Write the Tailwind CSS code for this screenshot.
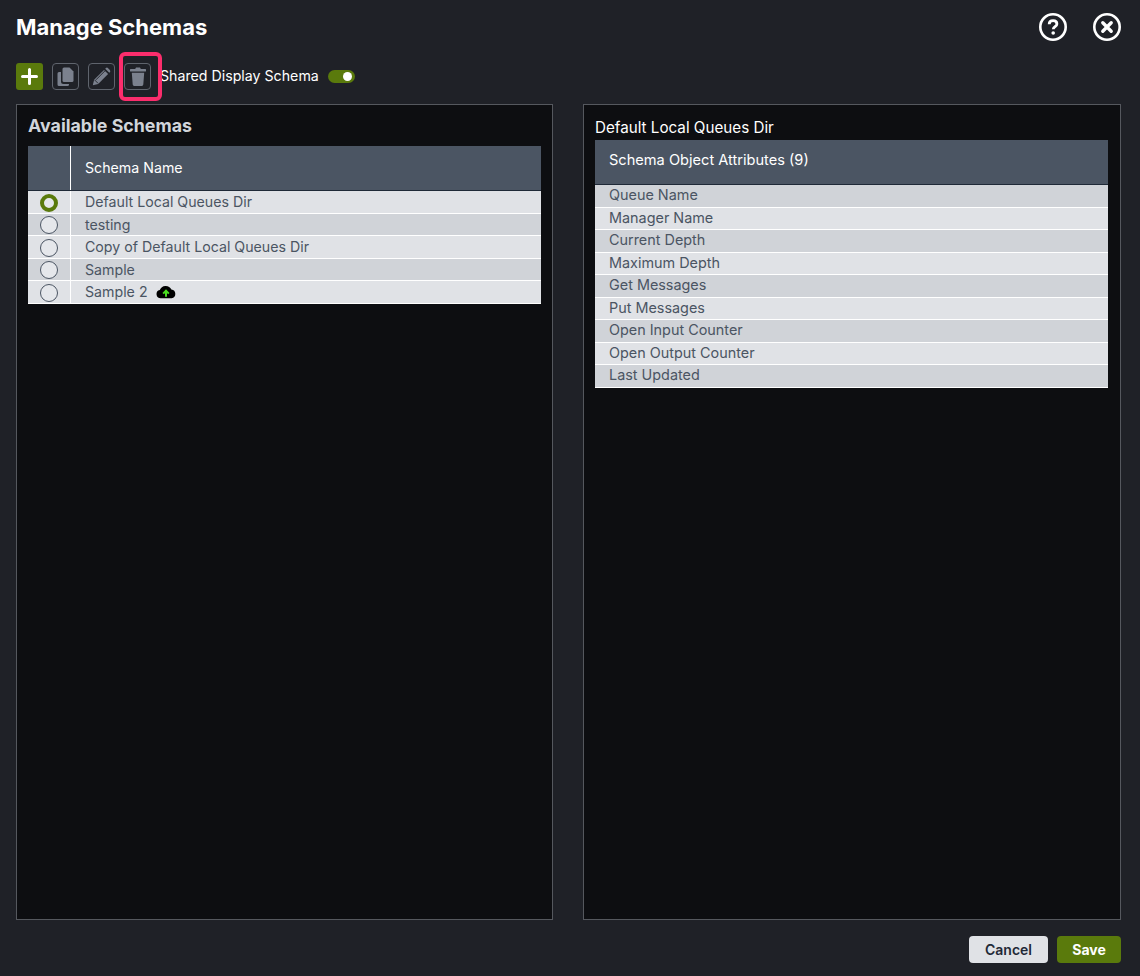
<!DOCTYPE html>
<html lang="en">
<head>
    <meta charset="UTF-8">
    <title>Manage Schemas</title>
    <script src="https://cdn.jsdelivr.net/npm/@tailwindcss/browser@4"></script>
</head>
<body class="bg-[#1f2127] text-white font-['Inter',sans-serif] h-[976px] w-[1140px] overflow-hidden flex flex-col px-4">

    <!-- title bar -->
    <div class="flex items-center justify-between h-[54px] shrink-0">
        <h1 class="text-[22px] font-bold leading-none">Manage Schemas</h1>
        <div class="flex items-center gap-[26px] pr-[3px]">
            <svg class="w-7 h-7" viewBox="0 0 28 28" fill="none">
                <circle cx="14" cy="14" r="12.7" stroke="#fff" stroke-width="2.6"/>
                <path d="M10.2 11.2c0-2.2 1.7-3.5 3.9-3.5 2.2 0 3.8 1.3 3.8 3.2 0 2.8-3.6 2.7-3.6 5.4" stroke="#fff" stroke-width="2.8" fill="none"/>
                <circle cx="14.2" cy="20" r="1.8" fill="#fff"/>
            </svg>
            <svg class="w-7 h-7" viewBox="0 0 28 28" fill="none">
                <circle cx="14" cy="14" r="12.7" stroke="#fff" stroke-width="2.6"/>
                <path d="M9.8 9.8l8.4 8.4M18.2 9.8l-8.4 8.4" stroke="#fff" stroke-width="3.4" stroke-linecap="round"/>
            </svg>
        </div>
    </div>

    <!-- toolbar -->
    <div class="flex items-center h-[27px] mt-[9px] shrink-0">
        <button class="w-[27px] h-[27px] rounded-[3px] bg-[#5a7a0c] flex items-center justify-center">
            <svg class="w-[17px] h-[17px]" viewBox="0 0 17 17"><path d="M8.5 1.5v14M1.5 8.5h14" stroke="#fff" stroke-width="3" stroke-linecap="round"/></svg>
        </button>
        <button class="w-[27px] h-[27px] ml-[9px] rounded-[4px] border border-[#5f646d] flex items-center justify-center">
            <svg class="w-[17px] h-[19px] mb-[1px]" viewBox="0 0 17 19" fill="#7b818e">
                <path d="M7 0.5h5.5l4 4v9a1.5 1.5 0 0 1-1.5 1.5H7a1.5 1.5 0 0 1-1.5-1.5V2A1.5 1.5 0 0 1 7 0.5z"/>
                <path d="M4 5v9.5A2.5 2.5 0 0 0 6.5 17H12v.5a1.5 1.5 0 0 1-1.5 1.5H2A1.5 1.5 0 0 1 .5 17.5V6.5A1.5 1.5 0 0 1 2 5z"/>
            </svg>
        </button>
        <button class="w-[27px] h-[27px] ml-[9px] rounded-[4px] border border-[#5f646d] flex items-center justify-center">
            <svg class="w-[19px] h-[19px] mb-[1px]" viewBox="0 0 19 19" fill="#7b818e">
                <path d="M.8 18.2l1.3-5.4L12 2.9l4.1 4.1L6.2 16.9z"/>
                <path d="M13.2 1.7l.5-.5a1.7 1.7 0 0 1 2.4 0l1.7 1.7a1.7 1.7 0 0 1 0 2.4l-.5.5z"/>
                <path d="M2.6 12.9l3.5 3.5M4 12.8l8.9-8.9" stroke="#1f2127" stroke-width=".9" fill="none"/>
            </svg>
        </button>
        <button class="relative w-[27px] h-[27px] ml-[9px] rounded-[4px] border border-[#5f646d] flex items-center justify-center">
            <svg class="w-[16px] h-[19px] mb-[1px]" viewBox="0 0 16 19" fill="#7b818e">
                <path d="M1 2h4.2L6 .5h4L10.800 2H15a1.300 1.300 0 0 1 0 2.600H1A1.300 1.300 0 0 1 1 2z"/>
                <path d="M1.8 5.800h12.400l-.9 11.800a1.500 1.500 0 0 1-1.500 1.400H4.200a1.500 1.500 0 0 1-1.500-1.400z"/>
            </svg>
            <span class="absolute left-[-6px] top-[-12px] w-[43px] h-[49px] rounded-[6px] border-[4px] border-[#fb2d6c]"></span>
        </button>
        <span class="ml-[9px] text-[14.2px] leading-none">Shared Display Schema</span>
        <span class="ml-[9px] w-[27px] h-[13px] rounded-full bg-[#5a7a0c] flex items-center justify-end pr-[3px]">
            <span class="w-[9px] h-[9px] rounded-full bg-white"></span>
        </span>
    </div>

    <!-- panels -->
    <div class="flex justify-between mt-[14px] h-[816px] shrink-0 pr-[3px]">
        <div class="w-[537px] bg-[#0d0e11] border border-[#55585e] px-[11px]">
            <h2 class="text-[17.800px] font-bold text-[#d1d5db] leading-[18px] mt-[12px] mb-[11px]">Available Schemas</h2>
            <div class="grid grid-cols-[43px_1fr] h-[45px] bg-[#4b5563] border-b border-[#1f2937]">
                <div class="border-r border-white"></div>
                <div class="flex items-center pl-[14px] text-[14.2px]">Schema Name</div>
            </div>
            <div class="text-[14.2px] text-[#4b5563]">
                <div class="grid grid-cols-[43px_1fr] h-[22.5px] bg-[#e0e2e6] border-b border-white">
                    <div class="border-r border-white flex items-center justify-center"><span class="mt-[1.5px] w-[18px] h-[18px] rounded-full border-[4.5px] border-[#5a7a0c] bg-[#e5e7eb]"></span></div>
                    <div class="flex items-center pl-[14px] pb-[0.5px]">Default Local Queues Dir</div>
                </div>
                <div class="grid grid-cols-[43px_1fr] h-[22.5px] bg-[#d0d3d8] border-b border-white">
                    <div class="border-r border-white flex items-center justify-center"><span class="mt-[1.5px] w-[18px] h-[18px] rounded-full border border-[#4b5563] bg-[#e5e7eb]"></span></div>
                    <div class="flex items-center pl-[14px] pb-[0.5px]">testing</div>
                </div>
                <div class="grid grid-cols-[43px_1fr] h-[22.5px] bg-[#e0e2e6] border-b border-white">
                    <div class="border-r border-white flex items-center justify-center"><span class="mt-[1.5px] w-[18px] h-[18px] rounded-full border border-[#4b5563] bg-[#e5e7eb]"></span></div>
                    <div class="flex items-center pl-[14px] pb-[0.5px]">Copy of Default Local Queues Dir</div>
                </div>
                <div class="grid grid-cols-[43px_1fr] h-[22.5px] bg-[#d0d3d8] border-b border-white">
                    <div class="border-r border-white flex items-center justify-center"><span class="mt-[1.5px] w-[18px] h-[18px] rounded-full border border-[#4b5563] bg-[#e5e7eb]"></span></div>
                    <div class="flex items-center pl-[14px] pb-[0.5px]">Sample</div>
                </div>
                <div class="grid grid-cols-[43px_1fr] h-[22.5px] bg-[#e0e2e6] border-b border-white">
                    <div class="border-r border-white flex items-center justify-center"><span class="mt-[1.5px] w-[18px] h-[18px] rounded-full border border-[#4b5563] bg-[#e5e7eb]"></span></div>
                    <div class="flex items-center pl-[14px] pb-[0.5px]">Sample 2
                        <svg class="ml-[8px] w-[20px] h-[15px]" viewBox="0 0 19 14">
                            <path d="M4.5 13.5A4 4 0 0 1 3.6 5.6 6 6 0 0 1 14.6 5a4.3 4.3 0 0 1 .2 8.5z" fill="#000"/>
                            <path d="M9.5 12V6.5M6.8 9l2.7-2.8L12.2 9" stroke="#4ade20" stroke-width="1.9" fill="none"/>
                        </svg>
                    </div>
                </div>
            </div>
        </div>

        <div class="w-[538px] bg-[#0d0e11] border border-[#55585e] pl-[11px] pr-[12px]">
            <div class="text-[15.2px] leading-none mt-[15px] mb-[5px]">Default Local Queues Dir</div>
            <div class="h-[45px] bg-[#4b5563] border-b border-[#1f2937] flex items-center pl-[14px] text-[14.6px] pb-[2px]">Schema Object Attributes (9)</div>
            <div class="text-[14.4px] text-[#4b5563]">
                <div class="h-[22.5px] bg-[#d0d3d8] border-b border-white flex items-center pl-[14px] pb-[1.5px]">Queue Name</div>
                <div class="h-[22.5px] bg-[#e0e2e6] border-b border-white flex items-center pl-[14px] pb-[1.5px]">Manager Name</div>
                <div class="h-[22.5px] bg-[#d0d3d8] border-b border-white flex items-center pl-[14px] pb-[1.5px]">Current Depth</div>
                <div class="h-[22.5px] bg-[#e0e2e6] border-b border-white flex items-center pl-[14px] pb-[1.5px]">Maximum Depth</div>
                <div class="h-[22.5px] bg-[#d0d3d8] border-b border-white flex items-center pl-[14px] pb-[1.5px]">Get Messages</div>
                <div class="h-[22.5px] bg-[#e0e2e6] border-b border-white flex items-center pl-[14px] pb-[1.5px]">Put Messages</div>
                <div class="h-[22.5px] bg-[#d0d3d8] border-b border-white flex items-center pl-[14px] pb-[1.5px]">Open Input Counter</div>
                <div class="h-[22.5px] bg-[#e0e2e6] border-b border-white flex items-center pl-[14px] pb-[1.5px]">Open Output Counter</div>
                <div class="h-[22.5px] bg-[#d0d3d8] border-b border-white flex items-center pl-[14px] pb-[1.5px]">Last Updated</div>
            </div>
        </div>
    </div>

    <!-- footer -->
    <div class="flex justify-end gap-[9px] mt-[16px] pr-[3px]">
        <button class="w-[79px] h-[27px] rounded-[4px] bg-[#e0e2e6] text-[#1f2937] text-[14px] font-semibold pb-[1px]">Cancel</button>
        <button class="w-[64px] h-[27px] rounded-[4px] bg-[#5a7a0c] text-white text-[14px] font-bold pb-[1px]">Save</button>
    </div>

</body>
</html>
